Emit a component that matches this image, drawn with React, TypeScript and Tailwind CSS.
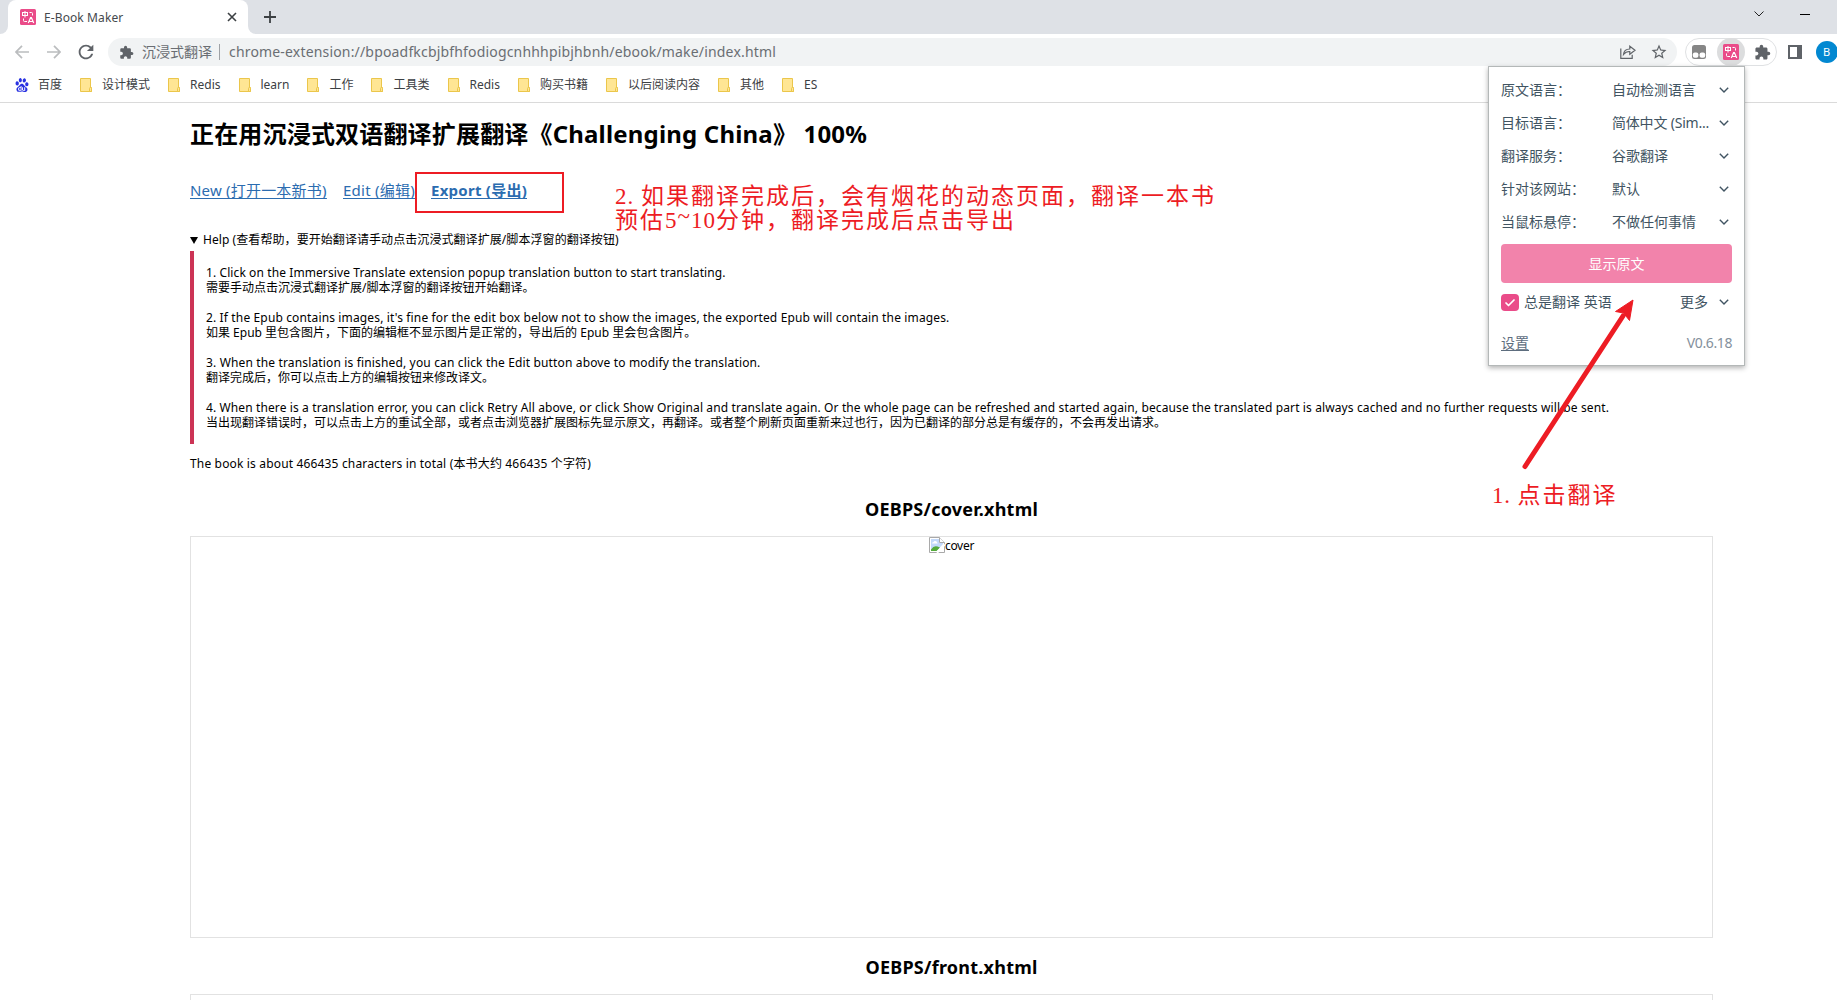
import type { ReactNode } from "react";
import { MdExtension, MdRefresh, MdStarBorder } from "react-icons/md";
import { SiBaidu } from "react-icons/si";
import { Check } from "lucide-react";

function TranslateLogo() {
  return (
    <svg viewBox="0 0 16 16" className="size-4 shrink-0">
      <rect width="16" height="16" rx="1.5" fill="#ea4c89" />
      <g fill="none" stroke="#fff" strokeWidth="1">
        <rect x="2.500" y="3.500" width="5" height="3" />
        <path d="M5 2v6.500M9.500 3.500h2q1 0 1 1v2M3.500 9.500v2q0 1 1 1h2.500" />
        <path d="M8.300 14l2.300-5.500h.8l2.300 5.500M9.300 12.500h3.400" strokeWidth="1.200" />
      </g>
    </svg>
  );
}

function Folder() {
  return (
    <svg viewBox="0 0 12 14" className="h-3.5 w-3 shrink-0">
      <path d="M.5 .5h10v9h1v4H.5z" fill="#ffe694" stroke="#ebc64b" />
      <path d="M9.500 13.500v-3q0-1 1-1t1 1v3z" fill="#ffe694" stroke="#ebc64b" />
    </svg>
  );
}

function Chevron() {
  return (
    <svg viewBox="0 0 10 6" className="h-1.5 w-2.5 shrink-0">
      <path d="M.8 .8L5 5l4.200-4.200" fill="none" stroke="#415462" strokeWidth="1.400" />
    </svg>
  );
}

function BrokenImage() {
  return (
    <svg viewBox="0 0 16 16" className="size-4 shrink-0">
      <path d="M.5 .5h10l5 5v10H.5z" fill="#fff" stroke="#a9a9a9" />
      <path d="M2 2h8v4h4v1L7.500 14H2z" fill="#c3d9fa" />
      <path d="M3 6.500q0-1.500 1.500-1.500q.5-1.500 2-1q1.500 0 1.500 1.500q.8 .2 .5 1z" fill="#fff" />
      <path d="M2 14v-1.500Q5 8 8.500 9.500L11 10.500 7.500 14z" fill="#54ab3b" />
      <path d="M10.500 .5v5h5" fill="#fff" stroke="#a9a9a9" />
      <path d="M15.800 7.500L8 15.800" stroke="#fff" strokeWidth="2" />
    </svg>
  );
}

const bookmarks = [
  "设计模式", "Redis", "learn", "工作", "工具类", "Redis", "购买书籍", "以后阅读内容", "其他", "ES",
];

const options = [
  ["原文语言：", "自动检测语言"],
  ["目标语言：", "简体中文 (Sim..."],
  ["翻译服务：", "谷歌翻译"],
  ["针对该网站：", "默认"],
  ["当鼠标悬停：", "不做任何事情"],
];

const help = [
  {
    en: "1. Click on the Immersive Translate extension popup translation button to start translating.",
    enTracking: "tracking-[0.095px]",
    zh: "需要手动点击沉浸式翻译扩展/脚本浮窗的翻译按钮开始翻译。",
  },
  {
    en: "2. If the Epub contains images, it's fine for the edit box below not to show the images, the exported Epub will contain the images.",
    enTracking: "tracking-[0.14px]",
    zh: "如果 Epub 里包含图片，下面的编辑框不显示图片是正常的，导出后的 Epub 里会包含图片。",
  },
  {
    en: "3. When the translation is finished, you can click the Edit button above to modify the translation.",
    enTracking: "tracking-[0.15px]",
    zh: "翻译完成后，你可以点击上方的编辑按钮来修改译文。",
  },
  {
    en: "4. When there is a translation error, you can click Retry All above, or click Show Original and translate again. Or the whole page can be refreshed and started again, because the translated part is always cached and no further requests will be sent.",
    enTracking: "tracking-[0.115px]",
    zh: "当出现翻译错误时，可以点击上方的重试全部，或者点击浏览器扩展图标先显示原文，再翻译。或者整个刷新页面重新来过也行，因为已翻译的部分总是有缓存的，不会再发出请求。",
  },
];

function TabStrip() {
  return (
    <div className="flex h-[34px] items-start bg-[#dee1e6]">
      <div className="h-[34px] w-2 bg-white"><div className="h-full w-full rounded-br-lg bg-[#dee1e6]" /></div>
      <div className="bg-[#dee1e6]">
        <div className="flex h-[34px] w-60 items-center rounded-t-lg bg-white pr-[11px] pl-3">
          <TranslateLogo />
          <span className="mt-px ml-2 text-xs tracking-[0.1px] text-[#45494d]">E-Book Maker</span>
          <svg viewBox="0 0 10 10" className="ml-auto size-2.5"><path d="M1 1l8 8M9 1L1 9" stroke="#3c4043" strokeWidth="1.600" /></svg>
        </div>
      </div>
      <div className="h-[34px] w-2 bg-white"><div className="h-full w-full rounded-bl-lg bg-[#dee1e6]" /></div>
      <svg viewBox="0 0 12 12" className="mt-[11px] ml-2 size-3"><path d="M6 0v12M0 6h12" stroke="#3c4043" strokeWidth="1.800" /></svg>
      <svg viewBox="0 0 10 6" className="mt-[11px] mr-9 ml-auto h-1.5 w-2.5"><path d="M.5 .5L5 5l4.500-4.500" fill="none" stroke="#222" /></svg>
      <div className="mt-3.5 mr-[27px] h-px w-2.5 bg-black" />
    </div>
  );
}

function Toolbar() {
  return (
    <div className="flex h-9 items-center pl-[15px]">
      <svg viewBox="0 0 14 14" className="size-3.5 shrink-0"><path d="M14 7H1M7 .8L1 7l6 6.200" fill="none" stroke="#bbbdbf" strokeWidth="1.700" /></svg>
      <svg viewBox="0 0 14 14" className="ml-[18px] size-3.5 shrink-0"><path d="M0 7h13M7 .8L13 7l-6 6.200" fill="none" stroke="#bbbdbf" strokeWidth="1.700" /></svg>
      <MdRefresh className="ml-3.5 size-[22px] shrink-0 text-[#5f6368]" />
      <div className="ml-[11px] flex h-7 w-[1569px] shrink-0 items-center rounded-full bg-[#f1f3f4] pr-[9px] text-sm text-[#6a6e73]">
        <MdExtension className="ml-[11px] size-[15px] text-[#5f6368]" />
        <span className="ml-2">沉浸式翻译</span>
        <div className="ml-[7px] h-4 w-px bg-[#9fa2a6]" />
        <span className="ml-[9px] tracking-[0.173px]">chrome-extension://bpoadfkcbjbfhfodiogcnhhhpibjhbnh/ebook/make/index.html</span>
        <svg viewBox="0 0 16 14" className="ml-auto h-3.5 w-4" fill="none" stroke="#5f6368" strokeWidth="1.200">
          <path d="M.8 3.500v9.800h11.400V9.800" />
          <path d="M3.500 9.500Q4 4 9.800 4V1.200L15 5.200 9.800 9.200V6.500Q6 6.300 3.500 9.500z" />
        </svg>
        <MdStarBorder className="ml-[14px] size-[18px] text-[#5f6368]" />
      </div>
      <div className="ml-2 flex h-7 w-[92px] shrink-0 items-center rounded-full border border-[#dfe1e3]">
        <svg viewBox="0 0 14 14" className="ml-[6px] size-3.5">
          <rect width="14" height="14" rx="2.500" fill="#868686" />
          <rect x=".8" y="7.400" width="5.600" height="5.400" rx="2" fill="#fff" />
          <rect x="7.600" y="7.400" width="5.600" height="5.400" rx="2" fill="#fff" />
        </svg>
        <div className="ml-[11px] flex size-7 items-center justify-center rounded-full bg-[#dcddde]"><TranslateLogo /></div>
        <MdExtension className="ml-[9px] size-[17px] text-[#5f6368]" />
      </div>
      <div className="ml-[11px] h-3.5 w-3.5 shrink-0 border-2 border-r-[5px] border-[#5f6368]" />
      <div className="ml-3.5 flex size-[22px] shrink-0 items-center justify-center rounded-full bg-[#0288d1] pr-px text-[11px] text-white">B</div>
    </div>
  );
}

function BookmarksBar() {
  return (
    <div className="flex h-7 items-center gap-[18px] pt-0.5 pl-[15px] text-xs text-[#3c4043]">
      <div className="flex items-center gap-[9px]"><SiBaidu className="size-3.5 text-[#2932e1]" />百度</div>
      {bookmarks.map((name, i) => (
        <div key={i} className="flex items-center gap-2.5">
          <Folder />
          <span>{name}</span>
        </div>
      ))}
    </div>
  );
}

function Section({ title, height, children }: { title: string; height: string; children?: ReactNode }) {
  return (
    <section>
      <h2 className="flex h-[56px] items-center justify-center pt-px text-lg font-bold tracking-[0.235px]">{title}</h2>
      <div className={"flex items-start justify-center border border-[#e2e2e2] " + height}>{children}</div>
    </section>
  );
}

function Popup() {
  return (
    <aside className="absolute top-[66px] left-[1488px] h-[300px] w-[257px] border border-[#b4b8b8] bg-white px-3 pt-1.5 text-sm text-[#415462] shadow-[0_2px_5px_rgba(0,0,0,0.3)]">
      {options.map(([label, value]) => (
        <div key={label} className="flex h-[33px] items-center">
          <span className="w-[111px]">{label}</span>
          <span className={value.includes("Sim") ? "tracking-[-0.2px]" : ""}>{value}</span>
          <span className="mr-[3px] ml-auto"><Chevron /></span>
        </div>
      ))}
      <div className="mt-1.5 flex h-[39px] items-center justify-center rounded bg-[#f283ab] text-white">显示原文</div>
      <div className="mt-[9px] flex h-[19px] items-center">
        <span className="mt-0.5 flex h-[17px] w-[18px] items-center justify-center rounded bg-[#ea4c89]"><Check className="size-3 text-white" strokeWidth={3.5} /></span>
        <span className="ml-[5px]">总是翻译 英语</span>
        <span className="mr-[11px] ml-auto">更多</span>
        <span className="mr-[3px]"><Chevron /></span>
      </div>
      <div className="mt-[22px] flex h-5 items-center justify-between">
        <span className="text-[#5d6d7e] underline underline-offset-2">设置</span>
        <span className="tracking-[-0.4px] text-[#84909c]">V0.6.18</span>
      </div>
    </aside>
  );
}

export default function App() {
  return (
    <div className="relative flex h-[1000px] w-[1837px] flex-col overflow-hidden bg-white font-['Noto_Sans','Noto_Sans_CJK_SC',sans-serif] text-black">
      <header className="h-[103px] shrink-0 border-b border-[#dadada]">
        <TabStrip />
        <Toolbar />
        <BookmarksBar />
      </header>
      <main className="ml-[190px] w-[1523px]">
        <h1 className="mt-[15px] text-2xl leading-8 font-bold tracking-[0.18px]">正在用沉浸式双语翻译扩展翻译《Challenging China》 100%</h1>
        <nav className="mt-7 flex h-6 text-[15px] leading-6 text-[#2b6cb0] underline underline-offset-2">
          <a className="w-[153px] tracking-[0.2px]">New (打开一本新书)</a>
          <a className="w-[88px] tracking-[0.25px]">Edit (编辑)</a>
          <a className="font-bold tracking-[0.25px]">Export (导出)</a>
        </nav>
        <div className="mt-[30px] flex h-4 items-center text-xs tracking-[0.07px]">
          <svg viewBox="0 0 8 7" className="mr-[5px] h-[7px] w-2"><path d="M0 0h8L4 7z" /></svg>
          Help (查看帮助，要开始翻译请手动点击沉浸式翻译扩展/脚本浮窗的翻译按钮)
        </div>
        <blockquote className="mt-[3px] flex h-[193px] flex-col gap-[15px] border-l-4 border-[#cc3355] pt-[14px] pl-3 text-xs leading-[15px] whitespace-nowrap">
          {help.map((h) => (
            <div key={h.zh}>
              <p className={h.enTracking}>{h.en}</p>
              <p>{h.zh}</p>
            </div>
          ))}
        </blockquote>
        <p className="mt-3 mb-[8px] h-4 text-xs tracking-[0.16px]">The book is about 466435 characters in total (本书大约 466435 个字符)</p>
        <Section title="OEBPS/cover.xhtml" height="h-[402px]">
          <BrokenImage />
          <span className="text-xs leading-[18px] tracking-[-0.3px]">cover</span>
        </Section>
        <Section title="OEBPS/front.xhtml" height="h-[402px]" />
      </main>

      <Popup />

      <div className="absolute top-[172px] left-[415px] h-[41px] w-[149px] border-2 border-[#ed1c24]" />
      <p className="absolute top-[185px] left-[615px] font-['Liberation_Serif','Noto_Sans_CJK_SC',serif] text-[23px] leading-6 tracking-[2px] whitespace-nowrap text-[#ed1c24]">
        <span className="tracking-[1px]">2. </span>如果翻译完成后，会有烟花的动态页面，翻译一本书
        <br />
        预估<span className="tracking-[1px]">5<span className="relative -top-1">~</span>10</span>分钟，翻译完成后点击导出
      </p>
      <p className="absolute top-[484px] left-[1492px] font-['Liberation_Serif','Noto_Sans_CJK_SC',serif] text-[23px] leading-6 tracking-[2px] whitespace-nowrap text-[#ed1c24]">
        <span className="tracking-[0.8px]">1. </span>点击翻译
      </p>
      <svg viewBox="0 0 120 180" className="absolute top-[294px] left-[1518px] h-[180px] w-[120px]">
        <path d="M7 172.500L105 22" stroke="#ed1c24" strokeWidth="5" strokeLinecap="round" />
        <path d="M115 6L97.500 17.500l8 1.500 6 7.500z" fill="#ed1c24" stroke="#ed1c24" />
      </svg>
    </div>
  );
}
